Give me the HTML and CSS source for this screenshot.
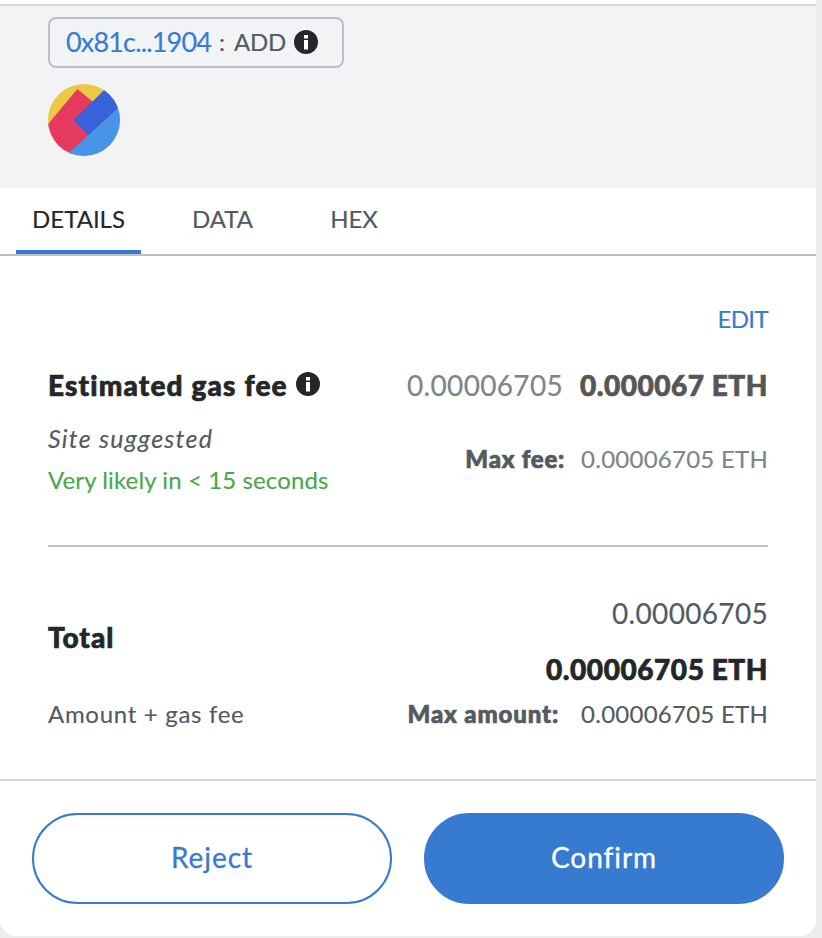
FILE: index.html
```html
<!DOCTYPE html>
<html lang="en">
<head>
<meta charset="utf-8">
<title>Confirm transaction</title>
<link rel="stylesheet" href="styles.css">
</head>
<body>
<main class="popup">
  <header class="summary">
    <div class="chip">
      <a class="address">0x81c...1904</a><span class="colon">:</span><span class="method">ADD</span>
      <svg class="info" viewBox="0 0 24 24"><circle cx="12" cy="12" r="12"/><path d="M10 5h4v3.400h-4zM10 10h4v9.500h-4z"/></svg>
    </div>
    <svg class="identicon" viewBox="0 0 72 72">
      <defs><clipPath id="disc"><circle cx="36" cy="36" r="36"/></clipPath></defs>
      <g clip-path="url(#disc)">
        <rect width="72" height="72" fill="#edc843"/>
        <path d="M29.3 5L-6 47.500V80H15L60 30z" fill="#e6395f"/>
        <path d="M76 18.500L16 73.500H76z" fill="#4794e9"/>
        <path d="M25.500 36L66 -3.500L90 6L40.500 51.200z" fill="#3762da"/>
      </g>
    </svg>
  </header>
  <nav class="tabs">
    <a class="tab active"><span class="t-details">DETAILS</span></a>
    <a class="tab"><span class="t-data">DATA</span></a>
    <a class="tab"><span class="t-hex">HEX</span></a>
  </nav>
  <section class="content">
    <a class="edit">EDIT</a>
    <div class="row fee">
      <div class="left">
        <h2 class="title gas-title"><span>Estimated gas fee</span>
          <svg class="info" viewBox="0 0 24 24"><circle cx="12" cy="12" r="12"/><path d="M10 5h4v3.400h-4zM10 10h4v9.500h-4z"/></svg>
        </h2>
        <p class="small suggested">Site suggested</p>
        <p class="small likely">Very likely in &lt; 15 seconds</p>
      </div>
      <div class="right">
        <p class="amount muted"><span>0.00006705</span><b class="rounded">0.000067 ETH</b></p>
        <p class="small max max-fee"><b>Max fee:</b><span>0.00006705 ETH</span></p>
      </div>
    </div>
    <div class="row total">
      <div class="left">
        <h2 class="title total-title">Total</h2>
        <p class="small caption">Amount + gas fee</p>
      </div>
      <div class="right">
        <p class="amount">0.00006705</p>
        <p class="amount strong">0.00006705 ETH</p>
        <p class="small max max-amount"><b>Max amount:</b><span>0.00006705 ETH</span></p>
      </div>
    </div>
  </section>
  <footer class="actions">
    <button class="btn reject">Reject</button>
    <button class="btn confirm">Confirm</button>
  </footer>
</main>
</body>
</html>
```
FILE: styles.css
```css
* { box-sizing: border-box; margin: 0; padding: 0; }
body {
  height: 938px;
  overflow: hidden;
  background: #ebedef;
  font-family: Lato, "Liberation Sans", sans-serif;
  color: #535a61;
  -webkit-text-stroke: .15px currentColor;
}
.popup {
  display: flex;
  flex-direction: column;
  width: 816px;
  height: 936px;
  padding-top: 4px;
  background: #fff;
  border-radius: 0 0 16px 16px;
  overflow: hidden;
}
.summary {
  height: 184px;
  padding: 11px 48px 0;
  border-top: 2px solid #d6d9dc;
  background: #f2f3f5;
}
.chip {
  display: flex;
  align-items: center;
  width: 296px;
  height: 51px;
  padding-left: 16px;
  border: 2px solid #bbc0c5;
  border-radius: 8px;
  font-size: 24px;
  line-height: 45px;
}
.chip span, .chip a { height: 47px; }
.chip .info { margin-bottom: 2px; }
.address { width: 153px; color: #377bd1; font-size: 27px; letter-spacing: -.83px; white-space: nowrap; }
.colon { width: 15px; }
.method { width: 60px; letter-spacing: -.25px; }
.info { flex: none; width: 24px; height: 24px; fill: #24272a; -webkit-text-stroke: 0; }
.info path { fill: #fff; }
.identicon { display: block; width: 72px; height: 72px; margin-top: 16px; }
.tabs {
  display: flex;
  gap: 13px;
  height: 68px;
  padding-left: 16px;
  border-bottom: 2px solid #bbc0c5;
}
.tab { height: 66px; width: 125px; text-align: center; font-size: 24px; line-height: 61px; }
.tab.active { border-bottom: 4px solid #377bd1; color: #24272a; }
.tab:nth-child(2) { width: 137px; }
.tab:nth-child(3) { width: 100px; }
.t-hex { letter-spacing: -.1px; }
.content { flex: 1; padding: 48px 48px 0; }
.edit { display: block; height: 31px; text-align: right; font-size: 24px; line-height: 29px; letter-spacing: -.6px; color: #377bd1; }
.row { display: flex; justify-content: space-between; }
.left { flex: none; }
.right { text-align: right; }
.fee { height: 212px; padding-top: 30px; border-bottom: 2px solid #bbc0c5; }
.title { display: flex; font-size: 28px; line-height: 40px; font-weight: 900; color: #24272a; }
.title, b, .strong { -webkit-text-stroke: .7px currentColor; }
.gas-title { gap: 8px; letter-spacing: 1.16px; }
.gas-title .info { margin-top: 7px; }
.small { font-size: 24px; line-height: 42px; white-space: nowrap; }
.suggested { margin-top: 12px; font-size: 25px; font-style: italic; letter-spacing: 1.25px; }
.likely { color: #4ca64c; letter-spacing: .11px; }
.amount { font-size: 28px; line-height: 40px; letter-spacing: .32px; white-space: nowrap; }
.muted { color: #7d848a; }
.rounded { margin-left: 17px; font-weight: 900; letter-spacing: .53px; color: #565656; }
.max { display: flex; justify-content: flex-end; letter-spacing: .25px; }
.max b { font-weight: 900; color: #535a61; }
.max-fee { margin-top: 33px; color: #7d848a; }
.max-fee b { margin-right: 16px; letter-spacing: .75px; }
.max-amount b { margin-right: 22px; letter-spacing: .86px; }
.total { padding-top: 46px; }
.total-title { margin-top: 24px; letter-spacing: .95px; }
.caption { margin-top: 36px; letter-spacing: .7px; }
.strong { margin-top: 16px; font-weight: 900; letter-spacing: .56px; color: #24272a; }
.max-amount { margin-top: 4px; }
.actions {
  display: flex;
  gap: 32px;
  height: 157px;
  padding: 32px 32px 0;
  border-top: 2px solid #d6d9dc;
}
.btn {
  flex: 1;
  height: 91px;
  padding-bottom: 3px;
  border: 2px solid #377bd1;
  border-radius: 46px;
  background: #fff;
  color: #377bd1;
  font: 28px/84px Lato, "Liberation Sans", sans-serif;
  letter-spacing: .95px;
  -webkit-text-stroke: .3px currentColor;
}
.confirm { background: #377bd1; color: #fff; }
```
